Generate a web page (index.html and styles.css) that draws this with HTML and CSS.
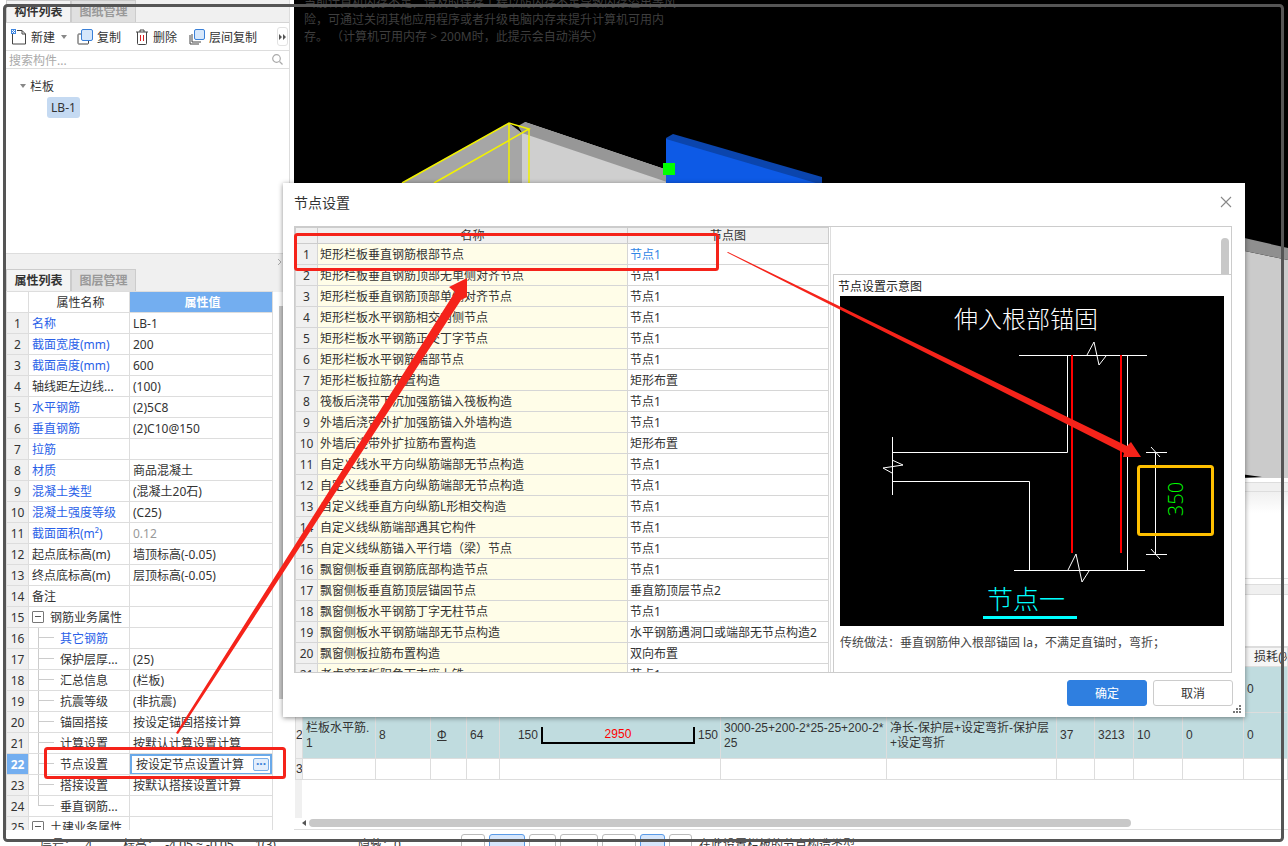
FILE: index.html
```html
<!DOCTYPE html>
<html lang="zh-CN">
<head>
  <meta charset="UTF-8">
  <title>节点设置</title>
  <link rel="stylesheet" href="styles.css">
</head>
<body>
  <div class="app">
    <div class="main">
      <!-- left column -->
      <div class="side">
        <div class="comp-panel">
          <div class="tabs">
            <div class="tab active">构件列表</div>
            <div class="tab">图纸管理</div>
          </div>
          <div class="toolbar">
            <div class="tool">
              <svg width="16" height="16" viewBox="0 0 16 16"><path d="M1.5 4.5V15h13V5L11 1.5H6" fill="#fff" stroke="#444"/><path d="M11 1.5V5h3.5" fill="none" stroke="#444"/><rect x="0" y="0" width="5" height="5" fill="#3f86e0"/><path d="M1 1h1v1H1zM3 1h1v1H3zM2 2h1v1H2zM1 3h1v1H1zM3 3h1v1H3z" fill="#fff"/></svg>
              <span>新建</span><i class="caret"></i>
            </div>
            <div class="tool">
              <svg width="16" height="16" viewBox="0 0 16 16"><path d="M4 5H1.5a.8.8 0 0 0-.5.6V14.500a.8.8 0 0 0 .5.5H11a.8.8 0 0 0 .5-.5V12" fill="none" stroke="#444"/><rect x="4.500" y="0.500" width="11" height="11" rx="1.500" fill="#d6e7fb" stroke="#3a80d8"/></svg>
              <span>复制</span>
            </div>
            <div class="tool">
              <svg width="14" height="16" viewBox="0 0 14 16"><path d="M1 3h12M5 3V1h4v2" fill="none" stroke="#444"/><path d="M2.500 3v11.500a1 1 0 0 0 1 1h7a1 1 0 0 0 1-1V3" fill="none" stroke="#444"/><path d="M5.500 6v6M8.500 6v6" stroke="#d92020"/></svg>
              <span>删除</span>
            </div>
            <div class="tool">
              <svg width="16" height="16" viewBox="0 0 16 16"><path d="M1 6v9h9M3 5v8h9" fill="none" stroke="#444"/><rect x="5.500" y="0.500" width="10" height="10" rx="1.500" fill="#d6e7fb" stroke="#3a80d8"/></svg>
              <span>层间复制</span>
            </div>
            <div class="more">
              <svg width="7" height="6" viewBox="0 0 7 6"><path d="M0 0l3 3-3 3zM4 0l3 3-3 3z" fill="#555"/></svg>
            </div>
          </div>
          <div class="search">
            <span>搜索构件...</span>
            <svg width="11" height="11" viewBox="0 0 11 11"><circle cx="4.500" cy="4.500" r="3.800" fill="none" stroke="#aaa" stroke-width="1.200"/><path d="M7.500 7.500l3 3" stroke="#aaa" stroke-width="1.200"/></svg>
          </div>
          <div class="tree">
            <div class="tree-group"><i class="caret"></i>栏板</div>
            <div class="tree-item">LB-1</div>
          </div>
        </div>
        <div class="split-bar">
          <svg width="5" height="8" viewBox="0 0 5 8"><path d="M1 1l3 3-3 3" fill="none" stroke="#aaa"/></svg>
        </div>
        <div class="prop-panel">
          <div class="tabs">
            <div class="tab active">属性列表</div>
            <div class="tab">图层管理</div>
          </div>
          <div class="prop-body">
            <table class="prop-table">
              <colgroup><col class="pc-idx"><col class="pc-name"><col class="pc-val"></colgroup>
              <tr><th></th><th>属性名称</th><th class="val-head">属性值</th></tr>
              <tr><td class="idx">1</td><td class="link">名称</td><td>LB-1</td></tr>
              <tr><td class="idx">2</td><td class="link">截面宽度(mm)</td><td>200</td></tr>
              <tr><td class="idx">3</td><td class="link">截面高度(mm)</td><td>600</td></tr>
              <tr><td class="idx">4</td><td>轴线距左边线...</td><td>(100)</td></tr>
              <tr><td class="idx">5</td><td class="link">水平钢筋</td><td>(2)5C8</td></tr>
              <tr><td class="idx">6</td><td class="link">垂直钢筋</td><td>(2)C10@150</td></tr>
              <tr><td class="idx">7</td><td class="link">拉筋</td><td></td></tr>
              <tr><td class="idx">8</td><td class="link">材质</td><td>商品混凝土</td></tr>
              <tr><td class="idx">9</td><td class="link">混凝土类型</td><td>(混凝土20石)</td></tr>
              <tr><td class="idx">10</td><td class="link">混凝土强度等级</td><td>(C25)</td></tr>
              <tr><td class="idx">11</td><td class="link">截面面积(m²)</td><td class="muted">0.12</td></tr>
              <tr><td class="idx">12</td><td>起点底标高(m)</td><td>墙顶标高(-0.05)</td></tr>
              <tr><td class="idx">13</td><td>终点底标高(m)</td><td>层顶标高(-0.05)</td></tr>
              <tr><td class="idx">14</td><td>备注</td><td></td></tr>
              <tr><td class="idx">15</td><td class="group"><i class="minus"></i>钢筋业务属性</td><td></td></tr>
              <tr><td class="idx">16</td><td class="child link">其它钢筋</td><td></td></tr>
              <tr><td class="idx">17</td><td class="child">保护层厚...</td><td>(25)</td></tr>
              <tr><td class="idx">18</td><td class="child">汇总信息</td><td>(栏板)</td></tr>
              <tr><td class="idx">19</td><td class="child">抗震等级</td><td>(非抗震)</td></tr>
              <tr><td class="idx">20</td><td class="child">锚固搭接</td><td>按设定锚固搭接计算</td></tr>
              <tr><td class="idx">21</td><td class="child">计算设置</td><td>按默认计算设置计算</td></tr>
              <tr><td class="idx selected">22</td><td class="child">节点设置</td>
                <td class="editing"><div class="edit-box"><span>按设定节点设置计算</span><i class="dots">···</i></div></td></tr>
              <tr><td class="idx">23</td><td class="child">搭接设置</td><td>按默认搭接设置计算</td></tr>
              <tr><td class="idx">24</td><td class="child last">垂直钢筋...</td><td></td></tr>
              <tr><td class="idx">25</td><td class="group"><i class="minus"></i>土建业务属性</td><td></td></tr>
            </table>
            <div class="prop-scroll"></div>
          </div>
        </div>
      </div>

      <!-- right column -->
      <div class="work">
        <div class="viewport">
          <svg class="scene" width="994" height="478" viewBox="294 0 994 478">
            <polygon points="509,123 402,183 402,240 522,240 522,133" fill="#a6a6a6"/>
            <polygon points="525,122 706,183 706,240 522,240 522,133" fill="#cfcfcf"/>
            <polygon points="518,126 525,122 706,183 670,183 522,133" fill="#979797"/>
            <polygon points="666,138 673,134 822,177 822,183 666,183" fill="#0b45ad"/>
            <polygon points="666,139 816,183 666,183" fill="#0d5ae6"/>
            <g fill="none" stroke="#f2f200" stroke-width="1.500">
              <path d="M402 183L509 123L529 129L434 183M509 123V183M529 129V183"/>
            </g>
            <rect x="663" y="163" width="12" height="12" fill="#00ff00"/>
            <polygon points="1240,250 1288,260 1288,478 1240,478" fill="#cbcbcb"/>
            <polygon points="1240,237 1288,248 1288,260 1240,250" fill="#8f8f8f"/>
            <polygon points="1240,474 1262,477 1240,478" fill="#000"/>
          </svg>
          <div class="mem-note">当前计算机内存不足，请及时保存工程以防内存不足导致内存溢出等风<br>险，可通过关闭其他应用程序或者升级电脑内存来提升计算机可用内<br>存。&nbsp;（计算机可用内存&nbsp;&gt;&nbsp;200M时，此提示会自动消失）</div>
        </div>
        <div class="lower">
          <div class="band-a"></div>
          <div class="band-b"></div>
          <div class="band-c"></div>
          <div class="band-d"></div>
          <div class="band-e"></div>
          <div class="band-f"></div>
          <div class="band-g"></div>
          <div class="rebar-wrap">
            <table class="rebar">
              <colgroup>
                <col class="c-idx"><col class="c-1"><col class="c-2"><col class="c-3"><col class="c-4"><col class="c-5"><col class="c-6"><col class="c-7"><col class="c-8"><col class="c-9"><col class="c-10"><col class="c-11"><col class="c-12">
              </colgroup>
              <tr class="head"><td class="idx"></td><td></td><td></td><td></td><td></td><td></td><td></td><td></td><td></td><td></td><td></td><td></td><td>损耗(%)</td></tr>
              <tr class="teal r1"><td class="idx">1</td><td></td><td></td><td></td><td></td><td></td><td></td><td></td><td></td><td></td><td></td><td></td><td>0</td></tr>
              <tr class="teal r2">
                <td class="idx">2</td><td>栏板水平筋.<br>1</td><td>8</td><td class="grade">Φ</td><td>64</td>
                <td><div class="shape"><span>150</span><div class="bracket">2950</div><span>150</span></div></td>
                <td>3000-25+200-2*25-25+200-2*<br>25</td>
                <td>净长-保护层+设定弯折-保护层<br>+设定弯折</td>
                <td>37</td><td>3213</td><td>10</td><td>0</td><td>0</td>
              </tr>
              <tr class="r3"><td class="idx">3</td><td></td><td></td><td></td><td></td><td></td><td></td><td></td><td></td><td></td><td></td><td></td><td></td></tr>
            </table>
          </div>
          <div class="hscroll">
            <i class="hs-arrow"></i>
            <div class="hs-thumb"></div>
          </div>
        </div>
      </div>
    </div>

    <div class="status">
      <span class="st-a">层号：&nbsp;&nbsp;&nbsp;4</span>
      <span class="st-b">标高：&nbsp;&nbsp;-4.05&nbsp;~&nbsp;-0.05</span>
      <span class="st-c">1(3)</span>
      <span class="st-d">隐藏：0</span>
      <div class="st-btns">
        <i class="sb b1"></i><i class="sb b2 on"></i><i class="sb b3"></i><i class="sb b4"></i><i class="sb b5"></i><i class="sb b6 on"></i><i class="sb b7"></i>
      </div>
      <span class="st-e">在此设置栏板的节点构造类型</span>
    </div>
  </div>

  <!-- dialog -->
  <div class="dialog">
    <div class="dlg-head">
      <span>节点设置</span>
      <svg width="12" height="12" viewBox="0 0 12 12"><path d="M1 1l10 10M11 1L1 11" stroke="#888" stroke-width="1.100"/></svg>
    </div>
    <div class="dlg-body">
      <div class="node-pane">
        <table class="node-table">
          <colgroup><col class="n-idx"><col class="n-name"><col class="n-val"></colgroup>
          <tr class="head"><td></td><td>名称</td><td>节点图</td></tr>
          <tr><td class="idx">1</td><td class="nm">矩形栏板垂直钢筋根部节点</td><td class="cur">节点1</td></tr>
          <tr><td class="idx">2</td><td class="nm">矩形栏板垂直钢筋顶部无单侧对齐节点</td><td>节点1</td></tr>
          <tr><td class="idx">3</td><td class="nm">矩形栏板垂直钢筋顶部单侧对齐节点</td><td>节点1</td></tr>
          <tr><td class="idx">4</td><td class="nm">矩形栏板水平钢筋相交内侧节点</td><td>节点1</td></tr>
          <tr><td class="idx">5</td><td class="nm">矩形栏板水平钢筋正交丁字节点</td><td>节点1</td></tr>
          <tr><td class="idx">6</td><td class="nm">矩形栏板水平钢筋端部节点</td><td>节点1</td></tr>
          <tr><td class="idx">7</td><td class="nm">矩形栏板拉筋布置构造</td><td>矩形布置</td></tr>
          <tr><td class="idx">8</td><td class="nm">筏板后浇带下沉加强筋锚入筏板构造</td><td>节点1</td></tr>
          <tr><td class="idx">9</td><td class="nm">外墙后浇带外扩加强筋锚入外墙构造</td><td>节点1</td></tr>
          <tr><td class="idx">10</td><td class="nm">外墙后浇带外扩拉筋布置构造</td><td>矩形布置</td></tr>
          <tr><td class="idx">11</td><td class="nm">自定义线水平方向纵筋端部无节点构造</td><td>节点1</td></tr>
          <tr><td class="idx">12</td><td class="nm">自定义线垂直方向纵筋端部无节点构造</td><td>节点1</td></tr>
          <tr><td class="idx">13</td><td class="nm">自定义线垂直方向纵筋L形相交构造</td><td>节点1</td></tr>
          <tr><td class="idx">14</td><td class="nm">自定义线纵筋端部遇其它构件</td><td>节点1</td></tr>
          <tr><td class="idx">15</td><td class="nm">自定义线纵筋锚入平行墙（梁）节点</td><td>节点1</td></tr>
          <tr><td class="idx">16</td><td class="nm">飘窗侧板垂直钢筋底部构造节点</td><td>节点1</td></tr>
          <tr><td class="idx">17</td><td class="nm">飘窗侧板垂直筋顶层锚固节点</td><td>垂直筋顶层节点2</td></tr>
          <tr><td class="idx">18</td><td class="nm">飘窗侧板水平钢筋丁字无柱节点</td><td>节点1</td></tr>
          <tr><td class="idx">19</td><td class="nm">飘窗侧板水平钢筋端部无节点构造</td><td>水平钢筋遇洞口或端部无节点构造2</td></tr>
          <tr><td class="idx">20</td><td class="nm">飘窗侧板拉筋布置构造</td><td>双向布置</td></tr>
          <tr><td class="idx">21</td><td class="nm">老虎窗顶板阳角下支座上铁</td><td>节点1</td></tr>
        </table>
      </div>
      <div class="preview-pane">
        <div class="pane-scroll"></div>
        <div class="preview">
          <div class="preview-title">节点设置示意图</div>
          <svg class="detail" width="384" height="330" viewBox="840 296 384 330">
            <rect x="840" y="296" width="384" height="330" fill="#000"/>
            <text x="1026" y="328" class="d-title" text-anchor="middle">伸入根部锚固</text>
            <g fill="none" stroke="#fff" stroke-width="1">
              <path d="M1019 355.500H1147M1087 355L1094 342L1099 365L1106 356"/>
              <path d="M1067.500 355V452.500H892.500M892.500 437V495M892 460L903 465L883 468L892 473"/>
              <path d="M892.500 481.500H1029.500V570.500M1014 570.500H1145M1068 570L1076 554L1082 582L1089 571"/>
              <path d="M1127.500 355V570"/>
              <path d="M1155.500 452V554M1146 452.500H1167M1146 554.500H1167M1151 447L1160 457M1151 549L1160 559"/>
            </g>
            <path d="M1072 355V553M1121 355V553" stroke="#ff0000" stroke-width="2"/>
            <rect x="1138.500" y="466.500" width="74" height="68" rx="2" fill="none" stroke="#ffc000" stroke-width="3"/>
            <text x="0" y="0" class="d-dim" text-anchor="middle" transform="translate(1183 499) rotate(-90)">350</text>
            <text x="1026" y="609" class="d-node" text-anchor="middle">节点一</text>
            <rect x="983" y="616" width="94" height="3" fill="#00ffff"/>
          </svg>
          <div class="preview-note">传统做法：垂直钢筋伸入根部锚固 la，不满足直锚时，弯折；</div>
        </div>
      </div>
    </div>
    <div class="dlg-foot">
      <button class="btn primary">确定</button>
      <button class="btn">取消</button>
    </div>
    <svg class="grip" width="10" height="10" viewBox="0 0 10 10"><path d="M7 0h2v2H7zM4 3h2v2H4zM7 3h2v2H7zM1 6h2v2H1zM4 6h2v2H4zM7 6h2v2H7z" fill="#777"/></svg>
  </div>

  <!-- red markup and the dark outline drawn over the screenshot -->
  <svg class="markup" width="1288" height="846" viewBox="0 0 1288 846">
    <rect x="295.500" y="234.500" width="422" height="35" rx="2" fill="none" stroke="#f5231a" stroke-width="3"/>
    <rect x="45.500" y="748.500" width="239" height="29" rx="2" fill="none" stroke="#f5231a" stroke-width="3"/>
    <polygon points="727,252.500 728,252 1127,446 1131,442 1141,457 1123,457 1124,453" fill="#f5231a"/>
    <polygon points="176,733 178,734 461,300 467,297 467,278 449,287 455,292" fill="#f5231a"/>
    <rect x="4.500" y="5.500" width="1278" height="835" rx="3" fill="none" stroke="#555" stroke-width="3"/>
  </svg>
</body>
</html>
```

FILE: styles.css
```css
* {
  box-sizing: border-box;
}
html, body {
  margin: 0;
  padding: 0;
  width: 1288px;
  height: 846px;
  overflow: hidden;
  background: #fff;
}
body {
  position: relative;
  font-family: "Noto Sans", "Noto Sans CJK SC", sans-serif;
  font-size: 12px;
  color: #333;
}
i {
  font-style: normal;
}
table {
  border-collapse: collapse;
  table-layout: fixed;
}
td, th {
  padding: 0;
  font-weight: normal;
  white-space: nowrap;
  overflow: hidden;
}
.app {
  display: flex;
  flex-direction: column;
  height: 846px;
}
.main {
  display: flex;
  height: 830px;
  flex: none;
}

/* left column */
.side {
  width: 294px;
  flex: none;
  display: flex;
  flex-direction: column;
  padding-left: 6px;
}
.comp-panel {
  height: 253px;
  width: 284px;
  border-right: 1px solid #ddd;
  flex: none;
}
.tabs {
  display: flex;
  height: 23px;
  background: #f0f0f0;
  border-bottom: 1px solid #d4d4d4;
}
.tab {
  width: 65px;
  text-align: center;
  line-height: 22px;
  font-weight: 700;
  color: #999;
  background: #e0e0e0;
  border: 1px solid #ccc;
  border-bottom: 0;
}
.tab.active {
  color: #333;
  background: #f4f4f4;
}
.toolbar {
  display: flex;
  align-items: center;
  height: 28px;
  padding-left: 5px;
  border-bottom: 1px solid #ddd;
}
.tool {
  display: flex;
  flex: none;
  align-items: center;
  gap: 4px;
  margin-right: 12px;
  white-space: nowrap;
}
.tool:first-child {
  margin-right: 10px;
}
.tool:nth-child(2) {
  margin-right: 14px;
}
.toolbar .caret {
  margin-left: 2px;
}
.caret {
  display: inline-block;
  width: 0;
  height: 0;
  border: 3.500px solid transparent;
  border-top: 4px solid #888;
  border-bottom: 0;
}
.more {
  margin-left: auto;
  margin-right: 1px;
  width: 11px;
  height: 19px;
  display: flex;
  align-items: center;
  justify-content: center;
  border: 1px solid #e2e2e2;
  border-radius: 3px;
}
.search {
  display: flex;
  align-items: center;
  justify-content: space-between;
  height: 18px;
  padding: 0 6px 0 3px;
  color: #aaa;
  border-bottom: 1px solid #ddd;
}
.tree {
  padding: 7px 0 0 14px;
}
.tree-group {
  display: flex;
  align-items: center;
  gap: 4px;
  height: 19px;
}
.tree-item {
  width: 33px;
  height: 21px;
  margin: 2px 0 0 27px;
  line-height: 21px;
  text-align: center;
  background: #c5daf2;
  border-radius: 3px;
}
.split-bar {
  height: 16px;
  width: 277px;
  background: #f0f0f0;
  border-top: 1px solid #ddd;
  display: flex;
  align-items: center;
  justify-content: flex-end;
  padding-right: 1px;
  flex: none;
}
.prop-panel {
  width: 277px;
  flex: 1;
  overflow: hidden;
  background: #fff;
}
.prop-panel .tabs {
  height: 23px;
  background: #f0f0f0;
  border-bottom: 0;
}
.prop-body {
  display: flex;
  align-items: flex-start;
  margin-top: -1px;
}
.prop-table {
  width: 266px;
  flex: none;
}
.pc-idx { width: 22px; }
.pc-name { width: 101px; }
.pc-val { width: 143px; }
.prop-table td, .prop-table th {
  height: 21px;
  border: 1px solid #ddd;
  padding-left: 3px;
  line-height: 19px;
}
.prop-table th {
  text-align: center;
}
.prop-table .val-head {
  background: #73aef0;
  color: #fff;
  font-weight: 700;
}
.prop-table .idx {
  padding: 0;
  text-align: center;
  background: #f0f0f0;
}
.prop-table .selected {
  background: #73aef0;
  color: #fff;
  font-weight: 700;
}
.prop-table .link {
  color: #2a5fe8;
}
.prop-table .muted {
  color: #999;
}
.prop-table .group {
  overflow: visible;
  position: relative;
  padding-left: 21px;
}
.minus {
  position: absolute;
  left: 3px;
  top: 4px;
  width: 12px;
  height: 12px;
  border: 1px solid #777;
  border-radius: 1px;
}
.minus::after {
  content: "";
  position: absolute;
  left: 2px;
  top: 4px;
  width: 6px;
  height: 1px;
  background: #555;
}
.prop-table .child {
  position: relative;
  padding-left: 31px;
}
.child::before {
  content: "";
  position: absolute;
  left: 9px;
  top: -1px;
  bottom: -1px;
  border-left: 1px solid #ccc;
}
.child::after {
  content: "";
  position: absolute;
  left: 9px;
  width: 16px;
  top: 9px;
  border-top: 1px solid #ccc;
}
.child.last::before {
  bottom: 10px;
}
.prop-table .editing {
  padding: 0;
}
.edit-box {
  display: flex;
  align-items: center;
  justify-content: space-between;
  height: 21px;
  margin: -1px 0;
  padding: 0 1px 0 4px;
  border: 2px solid #6aa9e9;
}
.dots {
  width: 16px;
  height: 13px;
  line-height: 10px;
  text-align: center;
  font-weight: 700;
  color: #3a80d8;
  background: #e2eefc;
  border: 1px solid #7aaee8;
  border-radius: 2px;
}
.prop-scroll {
  width: 5px;
  height: 393px;
  margin: 15px 0 0 6px;
  background: #c8c8c8;
}

/* right column */
.work {
  flex: 1;
  display: flex;
  flex-direction: column;
  min-width: 0;
}
.viewport {
  position: relative;
  height: 478px;
  flex: none;
  background: #000;
  overflow: hidden;
}
.scene {
  position: absolute;
  left: 0;
  top: 0;
}
.mem-note {
  position: absolute;
  left: 10px;
  top: -6px;
  line-height: 17px;
  color: #3e3e3e;
  white-space: nowrap;
}
.lower {
  height: 352px;
  display: flex;
  flex-direction: column;
  border-bottom: 1px solid #ddd;
}
.band-a { height: 4px; }
.band-b {
  height: 10px;
  background: #f0f0f0;
  border-top: 1px solid #ddd;
  border-bottom: 1px solid #ddd;
}
.band-c {
  height: 21px;
  background: linear-gradient(#f0f0f0, #fff);
}
.band-d {
  height: 66px;
  border-bottom: 1px solid #ddd;
}
.band-e {
  height: 5px;
}
.band-f {
  height: 11px;
  background: #f0f0f0;
  border-top: 1px solid #ddd;
  border-bottom: 1px solid #ddd;
}
.band-g {
  height: 52px;
  border-bottom: 1px solid #ddd;
}
.rebar-wrap {
  flex: 1;
  padding-left: 1px;
  overflow: hidden;
  background: linear-gradient(#f0f0f0, #f0f0f0) 1px 0 / 7px 100% no-repeat;
}
.rebar {
  width: 992px;
  font-family: "Liberation Sans", "Noto Sans CJK SC", sans-serif;
}
.c-idx { width: 7px; }
.c-1 { width: 73px; }
.c-2 { width: 55px; }
.c-3 { width: 36px; }
.c-4 { width: 33px; }
.c-5 { width: 221px; }
.c-6 { width: 166px; }
.c-7 { width: 170px; }
.c-8 { width: 38px; }
.c-9 { width: 39px; }
.c-10 { width: 49px; }
.c-11 { width: 61px; }
.c-12 { width: 44px; }
.rebar td {
  border: 1px solid #ddd;
  padding-left: 3px;
  line-height: 15px;
}
.rebar .idx {
  padding: 0;
  text-align: center;
  background: #f0f0f0;
}
.rebar .head td {
  height: 19px;
  background: #f6f6f6;
  padding-left: 10px;
}
.rebar .teal td:not(.idx) {
  background: #c0dcdf;
}
.r1 td { height: 46px; }
.r2 td { height: 46px; }
.r3 td { height: 21px; }
.rebar .grade {
  padding-left: 6px;
  text-decoration: underline;
}
.shape {
  display: flex;
  align-items: center;
  justify-content: flex-end;
  gap: 3px;
  padding-right: 2px;
}
.bracket {
  width: 154px;
  height: 17px;
  text-align: center;
  color: #f00;
  line-height: 15px;
  border: 2px solid #000;
  border-top: 0;
}
.hscroll {
  height: 10px;
  flex: none;
  display: flex;
  align-items: center;
  margin-bottom: 1px;
  padding-left: 8px;
  background: #fff;
}
.hs-arrow {
  width: 0;
  height: 0;
  border: 3px solid transparent;
  border-right: 4px solid #555;
  border-left: 0;
}
.hs-thumb {
  width: 822px;
  height: 8px;
  margin-left: 3px;
  background: #c8c8c8;
  border-radius: 4px;
}

/* status bar */
.status {
  height: 16px;
  flex: none;
  overflow: hidden;
  line-height: 16px;
  padding: 7px 0 0 40px;
  display: flex;
  white-space: nowrap;
}
.st-a { width: 83px; flex: none; }
.st-b { width: 132px; flex: none; }
.st-c { width: 103px; flex: none; }
.st-d { width: 103px; flex: none; }
.st-e { margin-left: 7px; }
.st-btns {
  display: flex;
  flex: none;
  gap: 4px;
  margin-top: -3px;
}
.sb {
  height: 20px;
  border: 1px solid #bbb;
  border-radius: 3px;
}
.sb.on {
  background: #d6e6fb;
  border-color: #5a9be8;
}
.b1 { width: 24px; }
.b2 { width: 36px; }
.b3 { width: 27px; }
.b4 { width: 38px; }
.b5 { width: 34px; }
.b6 { width: 25px; }
.b7 { width: 23px; }

/* dialog */
.dialog {
  position: absolute;
  left: 283px;
  top: 183px;
  width: 962px;
  height: 534px;
  background: #fff;
  box-shadow: 0 1px 5px rgba(0, 0, 0, 0.45);
  padding: 0 13px 0 11px;
}
.dlg-head {
  height: 43px;
  display: flex;
  align-items: center;
  justify-content: space-between;
  font-size: 14px;
  padding-bottom: 6px;
}
.dlg-body {
  display: flex;
  height: 447px;
  border: 1px solid #ccc;
}
.node-pane {
  width: 535px;
  flex: none;
  overflow: hidden;
  height: 445px;
}
.node-table {
  width: 533px;
}
.n-idx { width: 22px; }
.n-name { width: 310px; }
.n-val { width: 201px; }
.node-table td {
  height: 21px;
  border: 1px solid #d6d6d6;
  padding-left: 2px;
  line-height: 19px;
}
.node-table .head td {
  height: 16px;
  padding: 0;
  line-height: 14px;
  text-align: center;
  background: #f0f0f0;
  border-color: #ccc;
}
.node-table .idx {
  padding: 0;
  text-align: center;
  background: #f0f0f0;
}
.node-table .nm {
  background: #fffde8;
}
.node-table .cur {
  color: #2f86e6;
}
.preview-pane {
  flex: 1;
  display: flex;
  flex-direction: column;
  align-items: flex-end;
  min-width: 0;
  border-left: 1px solid #ddd;
}
.pane-scroll {
  width: 8px;
  height: 36px;
  margin: 11px 2px 0 0;
  background: #c8c8c8;
  border-radius: 4px 4px 0 0;
  flex: none;
}
.preview {
  width: 398px;
  flex: 1;
  border: 1px solid #ccc;
  border-right: 0;
  border-bottom: 0;
  padding: 0 0 0 6px;
  background: #fff;
}
.preview-title {
  height: 21px;
  line-height: 24px;
  margin-left: -2px;
  color: #222;
}
.detail {
  display: block;
}
.d-title {
  fill: #fff;
  font-size: 24px;
  font-weight: 300;
}
.d-dim {
  fill: #00ff00;
  font-size: 20px;
  font-weight: 300;
  font-family: "Open Sans", sans-serif;
}
.d-node {
  fill: #00ffff;
  font-size: 26px;
  font-weight: 300;
}
.preview-note {
  margin-top: 7px;
  color: #444;
}
.dlg-foot {
  display: flex;
  justify-content: flex-end;
  gap: 6px;
  padding-top: 7px;
  margin-right: -1px;
}
.btn {
  width: 80px;
  height: 26px;
  padding: 0;
  font: inherit;
  color: #333;
  background: #fff;
  border: 1px solid #ccc;
  border-radius: 3px;
}
.btn.primary {
  color: #fff;
  background: #2f7fe0;
  border-color: #2f7fe0;
}
.grip {
  position: absolute;
  right: 3px;
  bottom: 2px;
}

/* overlay */
.markup {
  position: absolute;
  left: 0;
  top: 0;
  pointer-events: none;
}
```
